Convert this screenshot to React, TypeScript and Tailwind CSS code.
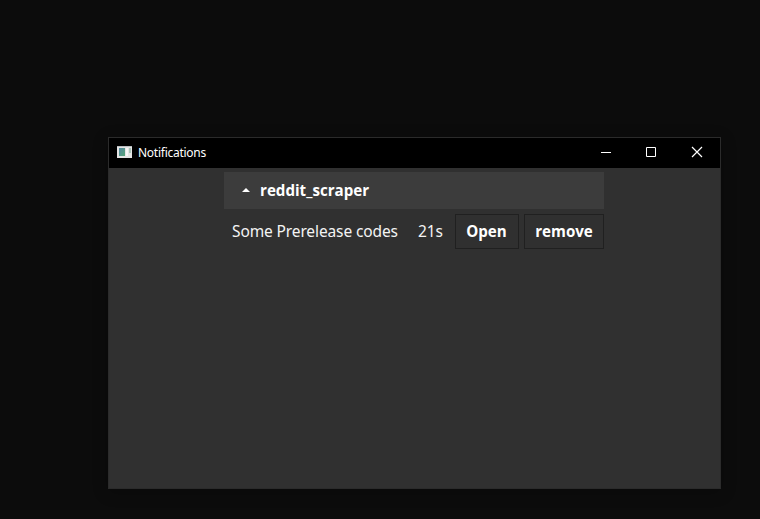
export default function App() {
  return (
    <div className="h-[519px] w-[760px] overflow-hidden bg-[#0c0c0c] pl-[108px] pt-[137px]">
      <main className="flex h-[352px] w-[613px] flex-col border border-[#2b2b2b] bg-[#303030] text-white shadow-[0_3px_14px_rgba(0,0,0,0.25)]">
        <header className="flex h-[30px] shrink-0 items-center bg-black pl-2">
          <svg width="16" height="16" viewBox="0 0 16 16" shapeRendering="crispEdges">
            <defs>
              <linearGradient id="pane" x1="0" y1="0" x2="1" y2="1">
                <stop offset="0" stopColor="#5486a0" />
                <stop offset="1" stopColor="#55a477" />
              </linearGradient>
            </defs>
            <rect x="0" y="1" width="15" height="12" fill="#e4e4e4" />
            <rect x="0" y="1" width="15" height="1" fill="#b9bdc0" />
            <rect x="2" y="3" width="6" height="8" fill="url(#pane)" />
            <rect x="9" y="3" width="2" height="8" fill="#f6f6f6" />
            <rect x="12" y="3" width="2" height="5" fill="#a9c4b8" />
          </svg>
          <span className="ml-[5px] font-['Noto_Sans',sans-serif] text-[12px] tracking-[-0.26px]">Notifications</span>
          <div className="ml-auto flex">
            <svg width="46" height="30" viewBox="0 0 46 30" stroke="white" fill="none"><path d="M19 14.5h10" /></svg>
            <svg width="46" height="30" viewBox="0 0 46 30" stroke="white" fill="none"><path d="M18.5 9.5h9v9h-9z" /></svg>
            <svg width="46" height="30" viewBox="0 0 46 30" stroke="white" strokeWidth="1.2" fill="none"><path d="M18 9l10 10M28 9l-10 10" /></svg>
          </div>
        </header>
        <section className="ml-[115px] mt-1 w-[380px] whitespace-nowrap font-['Noto_Sans',sans-serif] text-[15.5px] leading-[22px] tracking-[-0.12px]">
          <div className="flex h-[37px] items-center bg-[#3c3c3c] pl-[17px] font-['Open_Sans',sans-serif] text-[15.15px] font-bold tracking-normal">
            <svg width="10" height="6" viewBox="0 0 10 6" className="-mt-px"><path d="M1 5l4-4 4 4z" fill="white" /></svg>
            <span className="-mt-px ml-[9px]">reddit_scraper</span>
          </div>
          <div className="mt-1 flex h-[36px] items-center">
            <span className="w-[186px] pl-2 text-[#f4f4f4]">Some Prerelease codes</span>
            <span className="w-[45px] pl-2 text-[#f4f4f4]">21s</span>
            <button className="h-[35px] w-[64px] border border-[#202020] pr-px font-['Open_Sans',sans-serif] text-[15.15px] font-bold tracking-normal">Open</button>
            <button className="ml-[5px] h-[35px] w-[80px] border border-[#202020] font-['Open_Sans',sans-serif] text-[15.15px] font-bold tracking-normal">remove</button>
          </div>
        </section>
      </main>
    </div>
  );
}
